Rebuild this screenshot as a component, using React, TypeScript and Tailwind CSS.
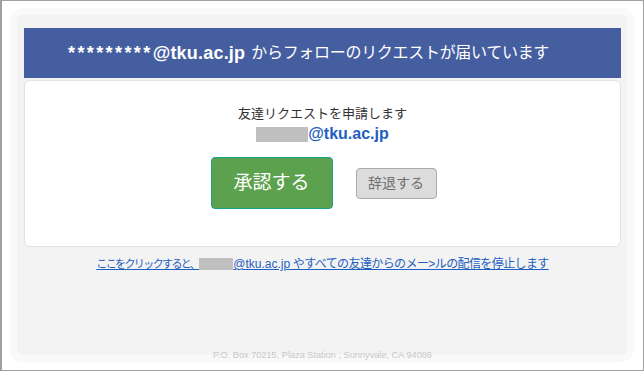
const FONT = "font-['Liberation_Sans','Noto_Sans_CJK_JP',sans-serif]";

function GrayMask({ w, h }: { w: number; h: number }) {
  // masked part of the address
  return (
    <span
      className="inline-block bg-[#c0c0c0] align-middle"
      style={{ width: w, height: h }}
    />
  );
}

export default function App() {
  return (
    <div
      className={`w-[644px] h-[371px] bg-white border border-l-2 border-[#a0a0a0] box-border overflow-hidden ${FONT}`}
    >
      {/* mail body */}
      <div className="ml-[15px] mt-[14px] w-[610px] h-[340px] bg-[#f3f3f3] rounded-[6px] shadow-[0_0_0_7px_#f9f9f9] flex flex-col pt-[13px] pl-[7px] pr-[6px]">
        {/* header */}
        <div className="h-[50px] bg-[#455e9f] flex items-center pl-[44px] text-white">
          <span className="text-[18px] font-bold tracking-[0.2px]">
            <span className="tracking-[2.4px]">*********</span>@tku.ac.jp
          </span>
          <span className="ml-[6px] text-[16px] tracking-[-0.3px]">
            からフォローのリクエストが届いています
          </span>
        </div>

        {/* card */}
        <div className="mt-[2px] h-[167px] bg-white border border-[#e2e2e2] rounded-[6px] flex flex-col items-center pt-[25px]">
          <p className="text-[13px] leading-[16px] text-[#333]">友達リクエストを申請します</p>
          <p className="mt-[3px] leading-[18px] flex items-center">
            <GrayMask w={52} h={15} />
            <span className="text-[16px] font-bold text-[#1f5fbf]">@tku.ac.jp</span>
          </p>
          <div className="mt-[14px] flex items-center gap-[23px] pl-[2px]">
            <button className="w-[122px] h-[52px] bg-[#5ca14d] border border-[#17a28c] rounded-[4px] text-white text-[19px]">
              承認する
            </button>
            <button className="w-[81px] h-[31px] bg-[#dcdcdc] border border-[#aaaaaa] rounded-[4px] text-[#707070] text-[14px]">
              辞退する
            </button>
          </div>
        </div>

        {/* unsubscribe link */}
        <p className="mt-[9px] leading-[16px] text-[#1f5fbf] underline flex items-center justify-center">
          <span className="text-[11px] tracking-[-1.6px]">ここをクリックすると、</span>
          <GrayMask w={34} h={12} />
          <span className="text-[12px]">@tku.ac.jp</span>
          <span className="text-[12px] tracking-[-0.6px]">&nbsp;やすべての友達からのメー&gt;ルの配信を停止します</span>
        </p>

        {/* footer */}
        <p className="mt-auto mb-[-6px] text-center text-[9.2px] leading-[12px] text-[#c8c8c8]">
          P.O. Box 70215, Plaza Station , Sunnyvale, CA 94086
        </p>
      </div>
    </div>
  );
}
